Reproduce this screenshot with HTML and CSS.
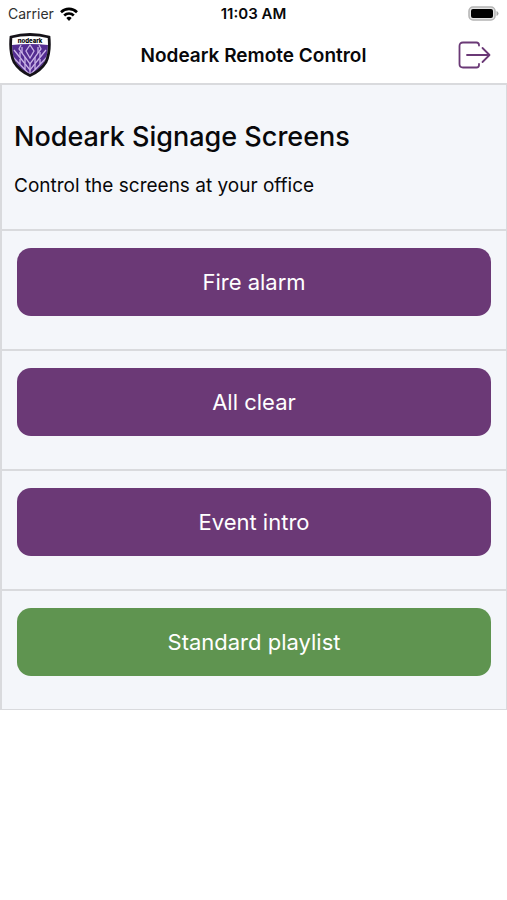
FILE: index.html
```html
<!DOCTYPE html>
<html lang="en">
<head>
<meta charset="utf-8">
<meta name="viewport" content="width=device-width, initial-scale=1">
<title>Nodeark Remote Control</title>
<link rel="stylesheet" href="styles.css">
</head>
<body>
<div class="status">
  <div class="carrier">
    <span>Carrier</span>
    <svg width="18" height="14" viewBox="0 0 18 14" aria-hidden="true">
      <g fill="none" stroke="#000" stroke-width="2.6">
        <path d="M1 5.2a11.4 11.4 0 0 1 16 0"/>
        <path d="M4.2 8.5a6.8 6.8 0 0 1 9.6 0"/>
      </g>
      <path d="M9 14l-2.7-3a3.8 3.8 0 0 1 5.4 0z"/>
    </svg>
  </div>
  <time class="clock">11:03 AM</time>
  <svg class="battery" width="31" height="15" viewBox="0 0 31 15" aria-hidden="true">
    <rect x="1" y="1" width="26" height="13" rx="4" fill="#e4e4e4" stroke="#b4b4b4" stroke-width="1.5"/>
    <rect x="3" y="3" width="22" height="9" rx="2"/>
    <path d="M28.500 5v5q2-.8 2-2.500t-2-2.500z" fill="#a8a8a8"/>
  </svg>
</div>
<header class="navbar">
  <svg class="logo" width="42" height="44" viewBox="0 0 42 44" role="img" aria-label="nodeark">
    <defs>
      <clipPath id="shield"><path d="M3.500 5Q12 3 21 3t17.500 2Q40 19 36 28q-5 9-15 14Q11 37 6 28 2 19 3.500 5z"/></clipPath>
    </defs>
    <path d="M2 4Q11 1.500 21 1.500T40 4q1.500 15-3 25-5.500 9-16 13.500Q10.500 38 5 29 .5 19 2 4z" fill="#fff"/>
    <g clip-path="url(#shield)">
      <path d="M2 12q9-1 19-1t19 1v32H2z" fill="#542d91"/>
      <g fill="none" stroke="#c9b3e6" stroke-width="1.300">
        <path d="M21 12l-4 6 4 7 4-7z"/>
        <path d="M12 12l-2 4 11 15 11-15-2-4"/>
        <path d="M13 20v-6M29 20v-6"/>
        <path d="M5 17l16 20 16-20"/>
        <path d="M11 24v-5M31 24v-5M16 30v-6M26 30v-6"/>
        <path d="M4 24l17 18 17-18M11 31v-5M31 31v-5M16 37v-6M26 37v-6M21 31v10"/>
      </g>
    </g>
    <path d="M2 4Q11 1.500 21 1.500T40 4q1.500 15-3 25-5.500 9-16 13.500Q10.500 38 5 29 .5 19 2 4z" fill="none" stroke="#151218" stroke-width="2.800"/>
    <text class="logo-text" x="21" y="9.500" text-anchor="middle">nodeark</text>
  </svg>
  <h1 class="title">Nodeark Remote Control</h1>
  <button class="logout" type="button" aria-label="Log out">
    <svg width="34" height="28" viewBox="0 0 34 28" aria-hidden="true">
      <g fill="none" stroke="#6a3976" stroke-width="1.800" stroke-linecap="round" stroke-linejoin="round">
        <path d="M21 4.500V4q0-2.500-2.500-2.500H5Q1.500 1.500 1.500 5v18q0 3.500 3.500 3.500h13.500Q21 26.500 21 24v-1"/>
        <path d="M9 14h22M24.500 7l7 7-7 7"/>
      </g>
    </svg>
  </button>
</header>
<main class="panel">
  <section class="row intro">
    <h2 class="heading">Nodeark Signage Screens</h2>
    <p class="text">Control the screens at your office</p>
  </section>
  <div class="row"><button class="action" type="button">Fire alarm</button></div>
  <div class="row"><button class="action" type="button">All clear</button></div>
  <div class="row"><button class="action" type="button">Event intro</button></div>
  <div class="row"><button class="action action-default" type="button">Standard playlist</button></div>
</main>
</body>
</html>
```
FILE: styles.css
```css
* {
  box-sizing: border-box;
}

body {
  margin: 0;
  background: #fff;
  color: #08080a;
  font-family: Inter, "Liberation Sans", sans-serif;
}

svg {
  display: block;
}

.status {
  display: grid;
  grid-template-columns: 1fr auto 1fr;
  align-items: center;
  height: 27px;
  padding: 0 8px;
}

.carrier {
  display: flex;
  align-items: center;
  gap: 6px;
  font-size: 14px;
  color: #303030;
}

.clock {
  font-size: 15px;
  font-weight: 600;
}

.battery {
  justify-self: end;
}

.navbar {
  display: grid;
  grid-template-columns: 1fr auto 1fr;
  align-items: center;
  height: 56px;
  padding: 0 9px;
}

.logo-text {
  font-size: 6px;
  font-weight: 800;
}

.title {
  margin: 0;
  font-size: 19px;
  font-weight: 600;
}

.logout {
  justify-self: end;
  padding: 0 6px;
  border: 0;
  background: none;
}

.panel {
  border: 1px solid #d9dadd;
  border-width: 0 1px 1px 2px;
  background: #f4f6fa;
}

.row {
  padding: 17px 15px 33px;
  border-top: 2px solid #d9dadd;
}

.intro {
  padding: 32px 12px 31px;
}

.heading {
  margin: 0 0 16px;
  font-size: 27px;
  font-weight: 500;
  line-height: 40px;
}

.text {
  margin: 0;
  font-size: 19px;
  line-height: 25px;
}

.action {
  display: block;
  width: 100%;
  height: 68px;
  border: 0;
  border-radius: 14px;
  background: #6b3976;
  color: #fff;
  font-family: inherit;
  font-size: 22px;
}

.action-default {
  background: #5f9450;
}
```
